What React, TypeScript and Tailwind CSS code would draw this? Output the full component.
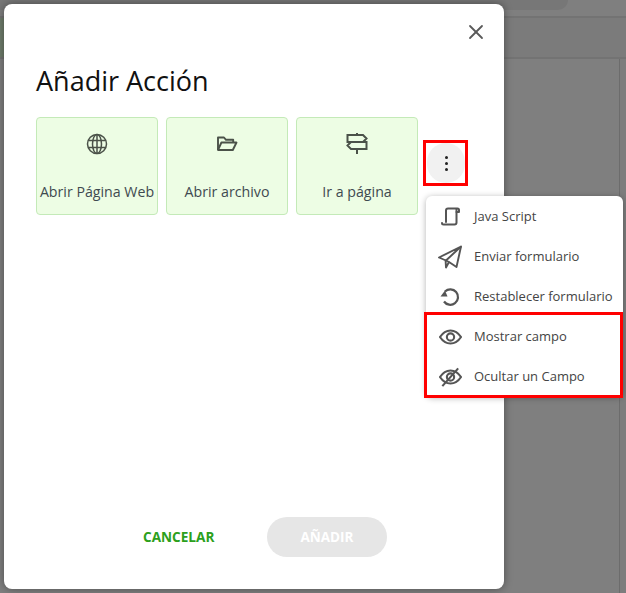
import React from "react";
import { X } from "lucide-react";

const GlobeIcon = () => (
  <svg width="22" height="22" viewBox="0 0 22 22" fill="none" stroke="#4b5249" strokeWidth="1.5">
    <circle cx="11" cy="11" r="9.5" />
    <ellipse cx="11" cy="11" rx="4.5" ry="9.5" />
    <path d="M11 1.500v19M2.200 7.500h17.600M2.200 14.500h17.600" />
  </svg>
);
const FolderIcon = () => (
  <svg width="22" height="22" viewBox="0 0 22 22" fill="none" stroke="#4b5249" strokeWidth="1.9" strokeLinejoin="round">
    <path d="M2 17V4.500h6l2 2.300h7.200V9.500" />
    <path d="M2 17h14.800L20.500 9.500H5.400L2 17Z" />
  </svg>
);
const SignIcon = () => (
  <svg width="22" height="22" viewBox="0 0 22 22" fill="none" stroke="#4b5249" strokeWidth="2" strokeLinejoin="miter">
    <path d="M11 0v2M11 9v0M11 16v5" />
    <path d="M1.500 2H17l3.500 3.500L17 9H1.500Z" />
    <path d="M20.500 9H5l-3.500 3.500L5 16h15.500Z" />
  </svg>
);
const ScrollIcon = () => (
  <svg width="20" height="22" viewBox="0 0 20 22" fill="none" stroke="#555" strokeWidth="2" strokeLinejoin="round" strokeLinecap="round">
    <path d="M6 16V4.500C6 3 6.800 2.500 8 2.500h9.500c1 0 1.500.7 1.500 1.500v2h-2.500" />
    <path d="M16.500 3v13.500c0 1.300-.7 2-2 2H3.500c-1 0-1.500-.5-1.500-1.500" />
  </svg>
);
const SendIcon = () => (
  <svg width="24" height="24" viewBox="0 0 24 24" fill="none" stroke="#555" strokeWidth="1.9" strokeLinejoin="round">
    <path d="M23 1.500 1 12.500l7 3 15-14Z" />
    <path d="M23 1.500 18.500 22l-7.500-5-3 5.500-.4-7" />
    <path d="M8 15.500 11 17" />
  </svg>
);
const ResetIcon = () => (
  <svg width="20" height="20" viewBox="0 0 20 20" fill="none" stroke="#555" strokeWidth="2.200">
    <path d="M5 4.500A7.700 7.700 0 1 1 4 14.500" />
    <path d="M0.500 9.500h7L5 3.500 0.500 9.500Z" fill="#555" stroke="none" />
  </svg>
);
const EyeIcon = () => (
  <svg width="23" height="16" viewBox="0 0 24 16" fill="none" stroke="#555" strokeWidth="2.200">
    <path d="M1 8c3-4.500 6.800-6.800 11-6.800S20 3.500 23 8c-3 4.500-6.800 6.800-11 6.800S4 12.500 1 8Z" />
    <circle cx="12" cy="8" r="3.800" />
  </svg>
);
const EyeOffIcon = () => (
  <svg width="23" height="20" viewBox="0 0 24 20" fill="none" stroke="#555" strokeWidth="2.200">
    <path d="M1 10c3-4.500 6.800-6.800 11-6.800S20 5.500 23 10c-3 4.500-6.800 6.800-11 6.800S4 14.500 1 10Z" />
    <circle cx="12" cy="10" r="3.800" />
    <path d="M20 1 3.500 19.500" />
  </svg>
);

const cards = [
  { label: "Abrir Página Web", icon: <GlobeIcon /> },
  { label: "Abrir archivo", icon: <FolderIcon /> },
  { label: "Ir a página", icon: <SignIcon /> },
];

const menu = [
  { label: "Java Script", icon: <ScrollIcon /> },
  { label: "Enviar formulario", icon: <SendIcon /> },
  { label: "Restablecer formulario", icon: <ResetIcon /> },
  { label: "Mostrar campo", icon: <EyeIcon /> },
  { label: "Ocultar un Campo", icon: <EyeOffIcon /> },
];

export default function App() {
  return (
    <div className="relative h-[593px] w-[626px] overflow-hidden bg-[#7f7f7f] font-['Open_Sans',sans-serif]">
      {/* dimmed page behind the dialog */}
      <div className="flex h-[18px] border-b-2 border-[#737373]">
        <div className="h-[10px] w-[568px] rounded-br-xl bg-[#777777]" />
      </div>
      <div className="h-[41px] border-b-2 border-[#737373] bg-[#7b7b7b]">
        <div className="h-full w-[5px] bg-[#6f7d6c]" />
      </div>
      <div className="flex h-[534px] justify-end">
        <div className="w-[7px] border-l border-[#6c6c6c] bg-[#7d7d7d]" />
      </div>

      <div className="absolute top-1 left-1 flex h-[585px] w-[500px] flex-col rounded-lg bg-white pl-8 shadow-[0_0_8px_rgba(0,0,0,0.4)]">
        <div className="flex justify-end pt-[16px] pr-[16px]">
          <X size={24} strokeWidth={1.8} color="#5a5a5a" />
        </div>
        <h1 className="mt-[17px] text-[27px] leading-[40px] text-[#111]">Añadir Acción</h1>
        <div className="mt-[16px] flex items-start gap-2">
          {cards.map((c) => (
            <div
              key={c.label}
              className="flex h-[98px] w-[122px] flex-col items-center rounded border border-[#c4eab8] bg-[#edfde4] pt-[15px]"
            >
              {c.icon}
              <span className="mt-[25px] text-[14.200px] leading-[24px] whitespace-nowrap text-[#3f4a50]">{c.label}</span>
            </div>
          ))}
          <div className="mt-[26px] ml-[1px] flex h-[40px] w-[38px] flex-col items-center justify-center gap-[3px] rounded-full bg-[#f1f1f1]">
            <span className="h-[3px] w-[3px] rounded-full bg-[#222]" />
            <span className="h-[3px] w-[3px] rounded-full bg-[#222]" />
            <span className="h-[3px] w-[3px] rounded-full bg-[#222]" />
          </div>
        </div>
        <div className="mt-auto mb-[32px] flex items-center">
          <span className="ml-[107px] w-[72px] text-[13.600px] font-bold whitespace-nowrap text-[#2ca01c]">CANCELAR</span>
          <div className="ml-[52px] flex h-10 w-[120px] items-center justify-center rounded-full bg-[#e6e6e6] text-[13.500px] font-bold text-white">
            AÑADIR
          </div>
        </div>
      </div>

      <div className="absolute top-[196px] left-[426px] w-[197px] rounded-md bg-white pt-[1px] shadow-[0_1px_6px_rgba(0,0,0,0.3)]">
        {menu.map((m) => (
          <div key={m.label} className="flex h-10 items-center">
            <div className="flex w-12 justify-center">{m.icon}</div>
            <span className="text-[13px] whitespace-nowrap text-[#444]">{m.label}</span>
          </div>
        ))}
      </div>

      <div className="absolute top-[140px] left-[423px] h-[46px] w-[45px] border-[3px] border-[#ff0000]" />
      <div className="absolute top-[312px] left-[424px] h-[86px] w-[199px] border-[3px] border-[#ff0000]" />
    </div>
  );
}
